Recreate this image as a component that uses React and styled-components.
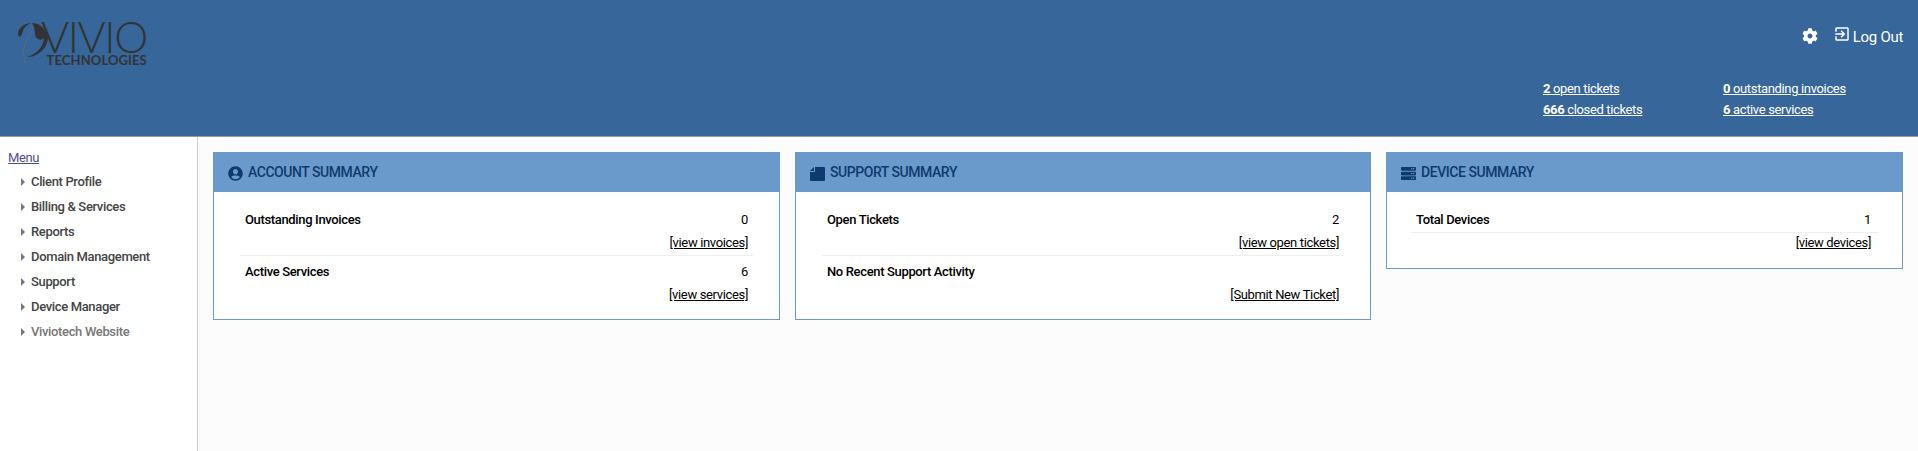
import React from "react";
import styled, { createGlobalStyle } from "styled-components";
import { FaCog, FaServer, FaUserCircle } from "react-icons/fa";
import { MdExitToApp } from "react-icons/md";

const GlobalStyle = createGlobalStyle`
  html, body {
    margin: 0;
    padding: 0;
    height: 100%;
    overflow: hidden;
    background: #fcfcfc;
    font-family: Roboto, "Liberation Sans", sans-serif;
    font-size: 13px;
    letter-spacing: -0.35px;
  }
  #root {
    height: 100%;
  }
`;

const Page = styled.div`
  display: flex;
  flex-direction: column;
  height: 451px;
`;

const Header = styled.header`
  display: flex;
  justify-content: space-between;
  height: 136px;
  background: #36669a;
  border-bottom: 1px solid #999;
  flex-shrink: 0;
`;

const Logo = styled.div`
  display: flex;
  align-items: flex-start;
  padding: 22px 0 0 18px;
`;

const LogoMark = styled.svg`
  width: 31px;
  height: 44px;
  margin-right: -8px;
  flex-shrink: 0;
`;

const LogoText = styled.div`
  display: flex;
  flex-direction: column;
  align-items: flex-end;
  color: #333;
  font-family: Lato, sans-serif;
`;

const LogoName = styled.span`
  font-size: 43px;
  font-weight: 300;
  line-height: 32px;
  letter-spacing: -1.4px;
  margin: -1px 0 1px;
`;

const LogoSub = styled.span`
  font-size: 13px;
  font-weight: 700;
  line-height: 12px;
  letter-spacing: 0.1px;
`;

const HeaderRight = styled.div`
  display: flex;
  flex-direction: column;
  width: 375px;
`;

const TopLinks = styled.div`
  display: flex;
  justify-content: flex-end;
  align-items: center;
  gap: 15px;
  padding: 26px 15px 0 0;
  color: #fff;
  font-size: 15px;
  letter-spacing: -0.3px;
  height: 20px;
`;

const GearIcon = styled(FaCog)`
  width: 16px;
  height: 16px;
`;

const LogOut = styled.a`
  display: flex;
  align-items: center;
  gap: 2px;
  color: #fff;
  padding-top: 1px;
`;

const ExitIcon = styled(MdExitToApp)`
  width: 18px;
  height: 18px;
  margin-top: -5px;
`;

const Stats = styled.div`
  display: grid;
  grid-template-columns: 180px 1fr;
  grid-auto-rows: 21px;
  margin-top: 32px;
`;

const Stat = styled.a`
  color: #fff;
  text-decoration: underline;
  line-height: 21px;

  b {
    font-weight: 700;
  }
`;

const Body = styled.div`
  display: flex;
  flex: 1;
  min-height: 0;
`;

const Sidebar = styled.nav`
  width: 198px;
  box-sizing: border-box;
  flex-shrink: 0;
  background: #fff;
  border-right: 1px solid #ccc;
  padding: 13px 0 0 8px;
`;

const MenuTitle = styled.a`
  display: block;
  color: #4d4d99;
  text-decoration: underline;
  line-height: 16px;
  margin-bottom: 3px;
`;

const MenuList = styled.ul`
  list-style: none;
  margin: 0;
  padding: 0;
`;

const MenuItem = styled.li`
  display: flex;
  align-items: center;
  height: 25px;
  padding-left: 13px;
  font-weight: 500;
  color: ${(p) => (p.$muted ? "#777" : "#444")};

  &::before {
    content: "";
    border-left: 4px solid #777;
    border-top: 4px solid transparent;
    border-bottom: 4px solid transparent;
    margin-right: 6px;
  }
`;

const Main = styled.main`
  display: flex;
  align-items: flex-start;
  flex: 1;
  gap: 15px;
  padding: 15px 15px 0 15px;
`;

const Panel = styled.section`
  width: ${(p) => p.$width}px;
  box-sizing: border-box;
  flex-shrink: 0;
  background: #fff;
  border: 1px solid #6a9acb;
  padding-bottom: ${(p) => p.$pad}px;
`;

const PanelHead = styled.h2`
  display: flex;
  align-items: center;
  gap: 5px;
  height: 39px;
  margin: 0;
  padding: 0 0 1px 14px;
  box-sizing: border-box;
  background: #6a9acb;
  color: #0f3a6e;
  font-size: 14px;
  font-weight: 500;
  letter-spacing: -0.45px;
  text-transform: uppercase;
`;

const HeadIconSlot = styled.span`
  display: flex;
  width: 15px;
  height: 15px;
  margin-top: 3px;

  svg {
    width: 100%;
    height: 100%;
  }
`;

const PanelRows = styled.div`
  padding: 19px ${(p) => p.$inset}px 0;
`;

const Row = styled.div`
  padding: ${(p) => p.$top}px ${(p) => p.$end}px 0 5px;
  height: ${(p) => p.$height}px;

  & + & {
    border-top: 1px solid #eee;
  }
`;

const RowLine = styled.div`
  display: flex;
  justify-content: space-between;
  line-height: 17px;
  color: #000;

  b {
    font-weight: 500;
  }
`;

const ActionLine = styled.div`
  text-align: right;
  margin-top: ${(p) => p.$top}px;
  line-height: 17px;
`;

const Action = styled.a`
  color: #000;
  text-decoration: underline;
`;

const TicketIcon = () => (
  <svg viewBox="0 0 15 15" fill="#0f3a6e">
    <path d="M5 1h9a1 1 0 0 1 1 1v12a1 1 0 0 1-1 1H1a1 1 0 0 1-1-1V6h5z" />
    <path d="M4 1v4H0z" />
  </svg>
);

const VivioMark = () => (
  <LogoMark viewBox="0 0 31 44">
    <path fill="#333" d="M0 12C0 6 5 2 13 1 9 3 6 5 5 9c-1 3-2 5-3 6-1-1-2-2-2-3z" />
    <path
      fill="#333"
      d="M14 1c8 0 14 6 16 14 0 7-4 13-9 16-4 3-8 4-12 4 7-2 13-7 15-12 1-2 2-5 2-7-2 2-4 2-6 1-2-1-3-3-3-5 0-4-1-8-3-11z"
    />
    <path
      fill="none"
      stroke="#5a6a7c"
      strokeWidth="1"
      d="M15 4c0 5-4 9-7 15-2 5-3 10-2 15 0 3 1 6 2 9"
    />
  </LogoMark>
);

const panels = [
  {
    title: "Account Summary",
    width: 567,
    pad: 9,
    inset: 26,
    end: 5,
    icon: <FaUserCircle />,
    rows: [
      { height: 44, top: 0, label: "Outstanding Invoices", value: "0", gap: 6, action: "[view invoices]" },
      { height: 47, top: 7, label: "Active Services", value: "6", gap: 6, action: "[view services]" },
    ],
  },
  {
    title: "Support Summary",
    width: 576,
    pad: 9,
    inset: 26,
    end: 5,
    icon: <TicketIcon />,
    rows: [
      { height: 44, top: 0, label: "Open Tickets", value: "2", gap: 6, action: "[view open tickets]" },
      { height: 47, top: 7, label: "No Recent Support Activity", gap: 6, action: "[Submit New Ticket]" },
    ],
  },
  {
    title: "Device Summary",
    width: 517,
    pad: 17,
    inset: 24,
    end: 7,
    icon: <FaServer />,
    rows: [
      { height: 21, top: 0, label: "Total Devices", value: "1" },
      { height: 17, top: 1, gap: 0, action: "[view devices]" },
    ],
  },
];

const menu = [
  "Client Profile",
  "Billing & Services",
  "Reports",
  "Domain Management",
  "Support",
  "Device Manager",
];

export default function App() {
  return (
    <Page>
      <GlobalStyle />
      <Header>
        <Logo>
          <VivioMark />
          <LogoText>
            <LogoName>VIVIO</LogoName>
            <LogoSub>TECHNOLOGIES</LogoSub>
          </LogoText>
        </Logo>
        <HeaderRight>
          <TopLinks>
            <GearIcon />
            <LogOut>
              <ExitIcon />
              Log Out
            </LogOut>
          </TopLinks>
          <Stats>
            <Stat><b>2</b> open tickets</Stat>
            <Stat><b>0</b> outstanding invoices</Stat>
            <Stat><b>666</b> closed tickets</Stat>
            <Stat><b>6</b> active services</Stat>
          </Stats>
        </HeaderRight>
      </Header>
      <Body>
        <Sidebar>
          <MenuTitle>Menu</MenuTitle>
          <MenuList>
            {menu.map((item) => (
              <MenuItem key={item}>{item}</MenuItem>
            ))}
            <MenuItem $muted>Viviotech Website</MenuItem>
          </MenuList>
        </Sidebar>
        <Main>
          {panels.map((panel) => (
            <Panel key={panel.title} $width={panel.width} $pad={panel.pad}>
              <PanelHead>
                <HeadIconSlot>{panel.icon}</HeadIconSlot>
                {panel.title}
              </PanelHead>
              <PanelRows $inset={panel.inset}>
                {panel.rows.map((row, i) => (
                  <Row key={i} $height={row.height} $top={row.top} $end={panel.end}>
                    {row.label && (
                      <RowLine>
                        <b>{row.label}</b>
                        <span>{row.value}</span>
                      </RowLine>
                    )}
                    {row.action && (
                      <ActionLine $top={row.gap}>
                        <Action>{row.action}</Action>
                      </ActionLine>
                    )}
                  </Row>
                ))}
              </PanelRows>
            </Panel>
          ))}
        </Main>
      </Body>
    </Page>
  );
}
